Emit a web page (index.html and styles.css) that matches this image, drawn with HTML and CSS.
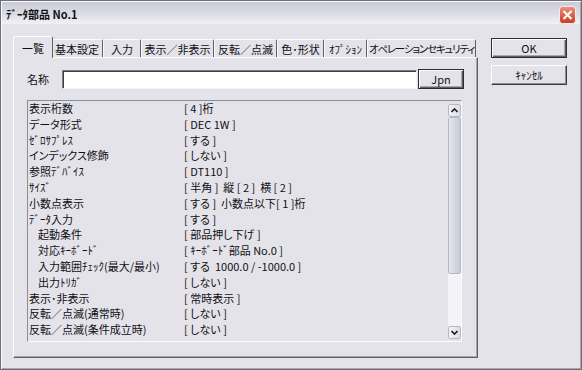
FILE: index.html
```html
<!DOCTYPE html>
<html lang="ja">
<head>
    <meta charset="UTF-8">
    <title>ﾃﾞｰﾀ部品 No.1</title>
    <link rel="stylesheet" href="styles.css">
</head>
<body>
    <div class="window">
        <div class="titlebar">
            <span class="title">ﾃﾞｰﾀ部品 No.1</span>
            <span class="close">
                <svg width="17" height="18" viewBox="0 0 17 18">
                    <defs>
                        <linearGradient id="red" x1="0" y1="0" x2="0" y2="1">
                            <stop offset="0" stop-color="#ee8f7c"/>
                            <stop offset="1" stop-color="#c83b22"/>
                        </linearGradient>
                    </defs>
                    <rect x="0.5" y="0.5" width="16" height="17" rx="3" fill="url(#red)" stroke="#f4f0f0"/>
                    <path d="M4.5 5 L12.5 13 M12.5 5 L4.5 13" stroke="#fff" stroke-width="2"/>
                </svg>
            </span>
        </div>

        <div class="client">
            <div class="tabs-area">
                <div class="tab-strip">
                    <div class="tab active">一覧</div>
                    <div class="tab">基本設定</div>
                    <div class="tab">入力</div>
                    <div class="tab">表示／非表示</div>
                    <div class="tab">反転／点滅</div>
                    <div class="tab">色･形状</div>
                    <div class="tab">ｵﾌﾟｼｮﾝ</div>
                    <div class="tab narrow">オペレーションセキュリティ</div>
                </div>

                <div class="tab-panel">
                    <div class="name-row">
                        <span class="name-label">名称</span>
                        <input type="text" class="name-input">
                        <button class="btn framed jpn">Jpn</button>
                    </div>

                    <div class="list">
                        <div class="rows">
                            <div class="row"><span class="key">表示桁数</span><span class="val">[ 4 ]桁</span></div>
                            <div class="row"><span class="key">データ形式</span><span class="val">[ DEC 1W ]</span></div>
                            <div class="row"><span class="key">ｾﾞﾛｻﾌﾟﾚｽ</span><span class="val">[ する ]</span></div>
                            <div class="row"><span class="key">インデックス修飾</span><span class="val">[ しない ]</span></div>
                            <div class="row"><span class="key">参照ﾃﾞﾊﾞｲｽ</span><span class="val">[ DT110 ]</span></div>
                            <div class="row"><span class="key">ｻｲｽﾞ</span><span class="val">[ 半角 ]&nbsp; 縦 [ 2 ]&nbsp; 横 [ 2 ]</span></div>
                            <div class="row"><span class="key">小数点表示</span><span class="val">[ する ]&nbsp; 小数点以下[ 1 ]桁</span></div>
                            <div class="row"><span class="key">ﾃﾞｰﾀ入力</span><span class="val">[ する ]</span></div>
                            <div class="row"><span class="key sub">起動条件</span><span class="val">[ 部品押し下げ ]</span></div>
                            <div class="row"><span class="key sub">対応ｷｰﾎﾞｰﾄﾞ</span><span class="val">[ ｷｰﾎﾞｰﾄﾞ部品 No.0 ]</span></div>
                            <div class="row"><span class="key sub">入力範囲ﾁｪｯｸ(最大/最小)</span><span class="val">[ する&nbsp; 1000.0 / -1000.0 ]</span></div>
                            <div class="row"><span class="key sub">出力ﾄﾘｶﾞ</span><span class="val">[ しない ]</span></div>
                            <div class="row"><span class="key">表示･非表示</span><span class="val">[ 常時表示 ]</span></div>
                            <div class="row"><span class="key">反転／点滅(通常時)</span><span class="val">[ しない ]</span></div>
                            <div class="row"><span class="key">反転／点滅(条件成立時)</span><span class="val">[ しない ]</span></div>
                        </div>

                        <div class="scrollbar">
                            <div class="sb-btn">
                                <svg width="7" height="5" viewBox="0 0 7 5"><path d="M0.5 4 L3.5 1 L6.5 4" fill="none" stroke="#1c1c24" stroke-width="1.6"/></svg>
                            </div>
                            <div class="sb-track">
                                <div class="sb-thumb"></div>
                            </div>
                            <div class="sb-btn">
                                <svg width="7" height="5" viewBox="0 0 7 5"><path d="M0.5 1 L3.5 4 L6.5 1" fill="none" stroke="#1c1c24" stroke-width="1.6"/></svg>
                            </div>
                        </div>
                    </div>
                </div>
            </div>

            <div class="side-buttons">
                <button class="btn framed">OK</button>
                <button class="btn">ｷｬﾝｾﾙ</button>
            </div>
        </div>
    </div>
</body>
</html>
```

FILE: styles.css
```css
body {
    margin: 0;
    width: 582px;
    height: 370px;
    overflow: hidden;
    background-color: #e4e3ea;
    font-family: "Noto Sans CJK JP", "Noto Sans", sans-serif;
    font-size: 11px;
    font-feature-settings: "palt";
    color: #101014;
}

.window {
    box-sizing: border-box;
    width: 582px;
    height: 370px;
    border: 1px solid #6e6e7a;
    box-shadow: inset 1px 1px 0 #fbfbfd, inset -1px -1px 0 #a6a6b2;
    display: flex;
    flex-direction: column;
}

.titlebar {
    height: 22px;
    margin: 1px 1px 0 1px;
    padding: 0 4px 0 4px;
    display: flex;
    align-items: center;
    justify-content: space-between;
    background: linear-gradient(#cbcbd7, #dcdce5 55%, #f1f1f6);
}

.title {
    font-weight: bold;
    font-size: 11px;
    padding-top: 1px;
}

.close {
    display: flex;
    margin-top: 3px;
}

.client {
    flex: 1;
    display: flex;
    padding: 12px 0 0 12px;
}

.tabs-area {
    flex: none;
    width: 465px;
    min-width: 0;
    display: flex;
    flex-direction: column;
}

.tab-strip {
    display: flex;
    align-items: flex-end;
    height: 22px;
    padding-left: 2px;
    margin-bottom: -1px;
    position: relative;
    z-index: 1;
}

.tab {
    flex: none;
    box-sizing: border-box;
    height: 18px;
    margin-bottom: 1px;
    padding-top: 2px;
    text-align: center;
    white-space: nowrap;
    border-top: 1px solid #fbfbfd;
    border-left: 1px solid #fbfbfd;
    border-right: 1px solid #5e5e6a;
    border-radius: 2px 2px 0 0;
    background-color: #e4e3ea;
    line-height: 14px;
}

/* widths follow the original dialog's tab headers */
.tab:nth-child(1) { width: 40px; }
.tab:nth-child(2) { width: 51px; }
.tab:nth-child(3) { width: 38px; }
.tab:nth-child(4) { width: 73px; }
.tab:nth-child(5) { width: 63px; }
.tab:nth-child(6) { width: 47px; }
.tab:nth-child(7) { width: 43px; }
.tab:nth-child(8) { width: 109px; }

.tab.narrow {
    font-size: 10.5px;
    letter-spacing: -1.2px;
}

.tab.active {
    height: 22px;
    margin-bottom: 0;
    padding-top: 4px;
    margin-left: -2px;
    margin-right: -1px;
    position: relative;
    z-index: 2;
}

.tab.active + .tab {
    border-left: none;
}

.tab-panel {
    box-sizing: border-box;
    height: 301px;
    padding: 11px 0 0 13px;
    border: 1px solid;
    border-color: #fbfbfd #5e5e6a #5e5e6a #fbfbfd;
    box-shadow: inset -1px -1px 0 #a6a6b2;
}

.name-row {
    display: flex;
    align-items: center;
    height: 20px;
}

.name-label {
    width: 35px;
}

.name-input {
    box-sizing: border-box;
    width: 355px;
    height: 19px;
    margin: 0;
    background-color: #fff;
    border: 1px solid;
    border-color: #7a7a86 #f4f4f8 #f4f4f8 #7a7a86;
    box-shadow: inset 1px 1px 0 #3c3c44;
    outline: none;
}

.btn {
    box-sizing: border-box;
    margin: 0;
    padding: 0;
    font-family: inherit;
    font-size: 11px;
    font-feature-settings: "palt";
    color: #101014;
    background-color: #e4e3ea;
    border: 1px solid;
    border-color: #fbfbfd #3c3c44 #3c3c44 #fbfbfd;
    box-shadow: inset -1px -1px 0 #8c8c98;
}

.btn.framed {
    border: 1px solid #2c2c34;
    box-shadow: inset 1px 1px 0 #fbfbfd, inset -1px -1px 0 #5e5e6a, inset -2px -2px 0 #a6a6b2;
}

.jpn {
    width: 46px;
    height: 20px;
    margin-left: 1px;
}

.list {
    box-sizing: border-box;
    width: 435px;
    height: 242px;
    margin-top: 11px;
    display: flex;
    border: 1px solid;
    border-color: #8c8c98 #fbfbfd #fbfbfd #8c8c98;
}

.rows {
    flex: 1;
}

.row {
    display: flex;
    height: 15.8px;
    line-height: 15.8px;
    white-space: nowrap;
}

.key {
    width: 155px;
    padding-left: 1px;
}

.key.sub {
    width: 146px;
    padding-left: 10px;
}

.scrollbar {
    width: 13px;
    margin: 3px 0 2px 0;
    display: flex;
    flex-direction: column;
    background-color: #f3f3f8;
}

.sb-btn {
    box-sizing: border-box;
    height: 13px;
    display: flex;
    align-items: center;
    justify-content: center;
    border: 1px solid #b6b6c6;
    border-radius: 2px;
    background: linear-gradient(90deg, #f2f2f7, #dcdce6);
}

.sb-track {
    flex: 1;
}

.sb-thumb {
    box-sizing: border-box;
    height: 157px;
    border: 1px solid #b6b6c6;
    border-radius: 2px;
    background: linear-gradient(90deg, #e6e6ee, #d2d2de 70%, #c8c8d4);
}

.side-buttons {
    flex: none;
    width: 76px;
    margin-left: 13px;
    padding-top: 2px;
    display: flex;
    flex-direction: column;
    gap: 7px;
}

.side-buttons .btn {
    height: 20px;
}
```
